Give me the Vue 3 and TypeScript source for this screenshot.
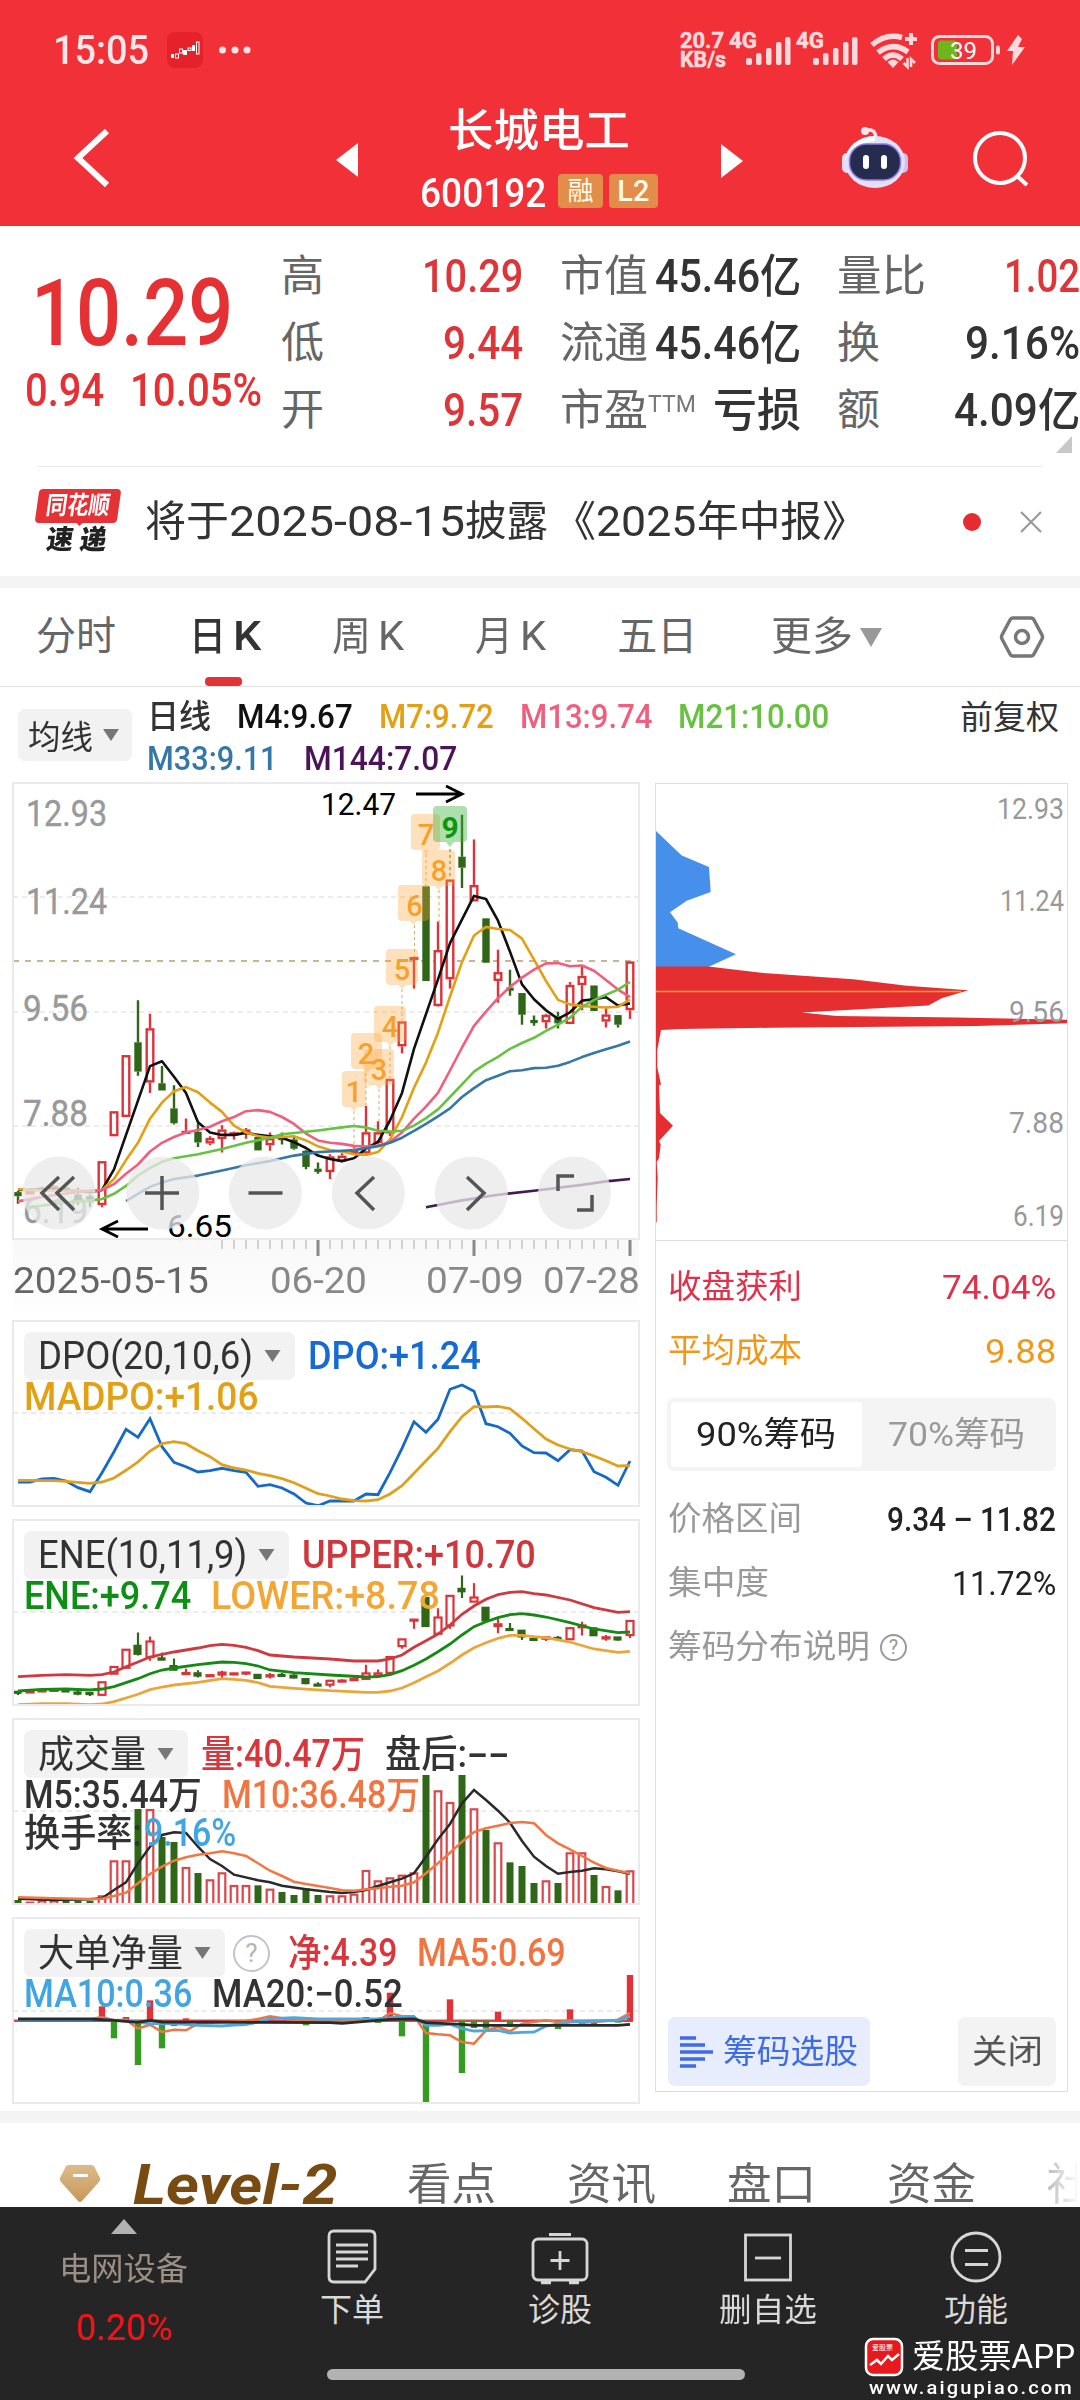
<script setup lang="ts">
import type { Directive } from 'vue'

// Stretches or condenses a line of text to the given width in pixels.
const vFit: Directive<HTMLElement, number> = {
  mounted(el, { value }) {
    const natural = el.offsetWidth
    el.style.transform = `scaleX(${value / natural})`
    el.style.marginRight = `${value - natural}px`
  },
}

type Pt = [number, number]
type Candle = ['r' | 'g', number, number, number, number]

const X0 = 5
const STEP = 12
const cx = (i: number) => X0 + i * STEP

function line(points: Pt[], y: (v: number) => number): string {
  return points.map(([i, v]) => `${cx(i).toFixed(1)},${y(v).toFixed(1)}`).join(' ')
}
function seq(values: number[], y: (v: number) => number): string {
  return line(values.map((v, i) => [i, v] as Pt), y)
}

const RED = '#dd3238'
const GREEN = '#2f6618'

/* ---------- price chart ---------- */
const py = (v: number) => (v - 40) / 2.904
// colour, body top, body bottom, wick top, wick bottom
const candles: Candle[] = [
  ['g', 1228, 1240, 1225, 1262], ['r', 1225, 1235, 1225, 1235], ['r', 1215, 1225, 1212, 1225], ['r', 1210, 1216, 1208, 1218],
  ['g', 1215, 1222, 1212, 1226], ['g', 1235, 1255, 1215, 1265], ['g', 1240, 1258, 1235, 1272], ['r', 1138, 1266, 1138, 1272],
  ['r', 993, 1066, 993, 1066], ['r', 830, 1010, 830, 1010], ['g', 793, 878, 671, 890], ['r', 752, 910, 710, 940],
  ['g', 912, 933, 862, 933], ['g', 985, 1028, 918, 1032], ['r', 1050, 1056, 1014, 1058], ['g', 1053, 1084, 1028, 1097],
  ['r', 1071, 1087, 1066, 1092], ['r', 1046, 1074, 1034, 1113], ['r', 1054, 1064, 1052, 1075], ['r', 1046, 1056, 1042, 1073],
  ['g', 1068, 1107, 1068, 1107], ['r', 1071, 1092, 1055, 1108], ['g', 1068, 1074, 1055, 1090], ['g', 1075, 1102, 1066, 1105],
  ['g', 1108, 1155, 1105, 1162], ['g', 1160, 1166, 1142, 1175], ['r', 1124, 1170, 1118, 1190], ['r', 1122, 1140, 1115, 1142],
  ['r', 1108, 1115, 1095, 1118], ['r', 1054, 1116, 977, 1120], ['r', 1054, 1086, 1022, 1090], ['r', 899, 1058, 899, 1065],
  ['r', 732, 805, 732, 825], ['r', 545, 554, 545, 637], ['g', 340, 615, 340, 615], ['r', 525, 688, 442, 690],
  ['r', 320, 610, 320, 637], ['g', 254, 286, 132, 345], ['r', 336, 384, 204, 384], ['g', 433, 562, 433, 562],
  ['r', 589, 615, 524, 678], ['g', 634, 642, 582, 658], ['g', 650, 713, 650, 742], ['g', 728, 734, 715, 745],
  ['r', 713, 735, 710, 753], ['g', 718, 738, 704, 753], ['r', 626, 740, 618, 740], ['r', 600, 627, 570, 700],
  ['g', 628, 702, 628, 702], ['r', 712, 733, 694, 750], ['g', 714, 742, 714, 750], ['r', 558, 700, 558, 725],
]

const ma4: Pt[] = [[0, 1222], [3, 1220], [6, 1228], [7, 1222], [8, 1162], [11, 862], [12, 848], [13, 893], [14, 940], [15, 1025], [16, 1055], [17, 1062], [18, 1062], [19, 1056], [20, 1062], [22, 1070], [23, 1083], [24, 1100], [25, 1122], [26, 1132], [27, 1138], [28, 1130], [29, 1102], [30, 1082], [31, 1020], [32, 940], [33, 812], [35, 610], [36, 505], [38, 368], [39, 377], [40, 440], [41, 530], [42, 625], [43, 668], [44, 700], [45, 725], [46, 706], [47, 672], [48, 668], [49, 662], [50, 686], [51, 680]]
const ma7: Pt[] = [[0, 1220], [1, 1222], [6, 1225], [7, 1222], [8, 1190], [9, 1135], [10, 1085], [11, 1015], [12, 968], [13, 935], [14, 923], [15, 938], [16, 968], [17, 995], [18, 1035], [19, 1055], [20, 1065], [21, 1070], [22, 1068], [23, 1066], [24, 1078], [25, 1095], [26, 1106], [27, 1110], [28, 1118], [29, 1120], [30, 1112], [31, 1075], [32, 1010], [33, 925], [34, 852], [35, 765], [36, 660], [37, 560], [38, 483], [39, 458], [40, 464], [41, 467], [42, 492], [43, 553], [44, 615], [45, 670], [46, 683], [47, 688], [48, 690], [49, 692], [50, 690], [51, 668]]
const ma13: Pt[] = [[0, 1255], [2, 1242], [4, 1232], [6, 1224], [7, 1222], [8, 1205], [9, 1175], [10, 1148], [11, 1110], [12, 1085], [13, 1068], [14, 1055], [15, 1048], [16, 1038], [17, 1022], [18, 1010], [19, 993], [20, 990], [21, 995], [22, 1010], [23, 1030], [24, 1058], [25, 1078], [26, 1085], [27, 1088], [28, 1094], [29, 1096], [30, 1094], [31, 1082], [32, 1055], [33, 1015], [34, 980], [35, 940], [36, 875], [37, 808], [38, 745], [39, 704], [40, 665], [41, 632], [42, 605], [43, 582], [44, 564], [45, 563], [46, 572], [47, 570], [48, 585], [49, 612], [50, 640], [51, 662]]
const ma21: Pt[] = [[1, 1272], [4, 1258], [6, 1252], [7, 1248], [8, 1233], [9, 1210], [10, 1180], [11, 1158], [12, 1140], [13, 1130], [15, 1118], [17, 1103], [19, 1085], [21, 1070], [22, 1060], [24, 1053], [25, 1049], [27, 1040], [28, 1036], [29, 1040], [30, 1050], [31, 1052], [32, 1050], [33, 1035], [34, 1013], [35, 988], [36, 952], [37, 915], [38, 878], [39, 855], [40, 835], [41, 812], [42, 795], [43, 780], [44, 760], [45, 742], [46, 722], [47, 690], [48, 670], [49, 655], [50, 640], [51, 618]]
const ma33: Pt[] = [[9, 1254], [10, 1233], [11, 1213], [12, 1200], [13, 1190], [15, 1180], [17, 1165], [19, 1150], [21, 1138], [23, 1122], [25, 1112], [26, 1110], [28, 1106], [30, 1095], [31, 1085], [32, 1070], [33, 1050], [34, 1030], [35, 1008], [36, 985], [37, 952], [38, 926], [39, 903], [40, 890], [41, 877], [42, 874], [43, 868], [44, 867], [45, 861], [46, 850], [47, 836], [48, 824], [49, 813], [50, 803], [51, 791]]
const ma144: Pt[] = [[34, 1272], [37, 1252], [40, 1236], [43, 1224], [47, 1207], [49, 1197], [51, 1190]]

const priceLines = [
  { color: '#111', pts: line(ma4, py) },
  { color: '#e3a014', pts: line(ma7, py) },
  { color: '#ef5f7e', pts: line(ma13, py) },
  { color: '#68c242', pts: line(ma21, py) },
  { color: '#3577a6', pts: line(ma33, py) },
  { color: '#451850', pts: line(ma144, py) },
]

const priceLabels = [
  { t: '12.93', x: 13, y: 43, w: 81 }, { t: '11.24', x: 13, y: 131, w: 81 }, { t: '9.56', x: 10, y: 238, w: 65 },
  { t: '7.88', x: 10, y: 342.5, w: 65 }, { t: '6.19', x: 10, y: 440, w: 65 },
]

// numbered markers: digit, bubble left, bubble top, bubble width, digit centre, stem bottom
const marks = [
  { n: 1, x: 329, y: 288, w: 24, c: 341, e: 370 }, { n: 2, x: 338, y: 250, w: 31, c: 353, e: 322 },
  { n: 3, x: 351, y: 266, w: 30, c: 366, e: 340 }, { n: 4, x: 361, y: 223, w: 32, c: 377, e: 297 },
  { n: 5, x: 373, y: 166, w: 32, c: 389, e: 240 }, { n: 6, x: 385, y: 102, w: 31, c: 401.5, e: 174 },
  { n: 7, x: 398, y: 31, w: 29, c: 413, e: 104 }, { n: 8, x: 409, y: 67, w: 33, c: 426, e: 140 },
]

const tools = [46, 149.7, 252.3, 355.3, 458.3, 561.5]
const ticks = Array.from({ length: 35 }, (_, k) => k + 17)

/* ---------- indicator panels ---------- */
const dy = (v: number) => (v - 33) / 3
const dpo = seq([516, 516, 507, 505, 513, 533, 545, 488, 425, 358, 382, 326, 410, 457, 470, 486, 482, 475, 482, 487, 529, 524, 534, 552, 579, 587, 573, 573, 573, 552, 554, 488, 415, 335, 367, 328, 238, 225, 244, 341, 350, 370, 408, 428, 429, 452, 419, 423, 485, 502, 526, 453], dy)
const madpo = seq([511, 511, 512, 512, 514, 517, 520, 516, 504, 481, 456, 423, 401, 395, 401, 422, 440, 464, 474, 480, 490, 497, 506, 518, 535, 551, 558, 567, 572, 573, 569, 552, 527, 490, 452, 415, 365, 320, 290, 291, 289, 296, 325, 356, 387, 405, 417, 425, 438, 452, 468, 467], dy)

const ey = (v: number) => (v - 630) / 3
const eneCandleY = (v: number) => ey(948 + (v - 610) * 0.317)
const upper = line([[0, 1100], [2, 1096], [4, 1094], [6, 1096], [7, 1094], [8, 1086], [9, 1070], [10, 1056], [11, 1041], [12, 1033], [13, 1026], [15, 1014], [16, 1007], [17, 1003], [18, 1006], [19, 1012], [20, 1022], [21, 1035], [23, 1041], [26, 1047], [28, 1053], [30, 1053], [31, 1047], [32, 1035], [33, 1012], [34, 992], [35, 972], [36, 945], [37, 913], [38, 888], [39, 868], [40, 854], [41, 847], [42, 845], [43, 851], [44, 855], [46, 870], [48, 893], [50, 907], [51, 905]], ey)
const ene = line([[0, 1143], [2, 1138], [4, 1137], [6, 1140], [7, 1137], [8, 1130], [9, 1118], [10, 1106], [11, 1091], [12, 1080], [13, 1074], [15, 1064], [17, 1056], [18, 1057], [19, 1061], [20, 1068], [21, 1080], [23, 1088], [26, 1095], [29, 1101], [30, 1100], [31, 1094], [32, 1082], [33, 1066], [34, 1047], [35, 1025], [36, 1002], [37, 975], [38, 950], [39, 935], [40, 923], [41, 914], [42, 911], [43, 915], [44, 921], [46, 938], [48, 957], [50, 968], [51, 966]], ey)
const lower = line([[0, 1184], [2, 1181], [4, 1181], [6, 1184], [7, 1182], [8, 1175], [9, 1164], [10, 1153], [11, 1139], [12, 1131], [13, 1125], [15, 1117], [17, 1106], [18, 1108], [19, 1111], [20, 1118], [21, 1129], [23, 1135], [26, 1142], [29, 1147], [30, 1147], [31, 1143], [32, 1134], [33, 1118], [34, 1100], [35, 1083], [36, 1060], [37, 1035], [38, 1013], [39, 998], [40, 985], [41, 976], [42, 976], [43, 980], [44, 983], [46, 996], [48, 1017], [50, 1027], [51, 1024]], ey)

const vy = (v: number) => (v - 27) / 3
const volumeTops = [570, 575, 571, 571, 572, 572, 573, 556, 451, 451, 297, 297, 381, 396, 471, 489, 508, 487, 525, 525, 526, 536, 546, 555, 535, 555, 556, 556, 551, 480, 511, 502, 494, 487, 195, 241, 276, 195, 295, 360, 397, 457, 468, 519, 511, 519, 427, 427, 495, 528, 541, 481]
const volM5 = line([[0, 566], [3, 570], [6, 568], [7, 565], [8, 540], [9, 517], [10, 460], [11, 410], [12, 375], [13, 367], [14, 369], [15, 410], [16, 447], [17, 468], [18, 494], [20, 511], [21, 517], [22, 527], [24, 538], [26, 546], [27, 549], [28, 546], [29, 540], [30, 528], [31, 517], [32, 506], [33, 490], [34, 440], [35, 388], [36, 342], [37, 280], [38, 240], [39, 270], [40, 302], [41, 338], [42, 393], [43, 440], [44, 468], [45, 491], [46, 486], [47, 482], [48, 475], [49, 478], [50, 484], [51, 491]], vy)
const volM10 = line([[0, 562], [3, 565], [6, 567], [7, 566], [8, 558], [9, 548], [10, 520], [11, 492], [12, 470], [13, 452], [14, 442], [15, 434], [16, 430], [17, 424], [18, 430], [19, 438], [20, 460], [21, 482], [22, 498], [23, 515], [24, 522], [25, 528], [26, 534], [27, 541], [28, 542], [29, 538], [30, 535], [31, 530], [32, 527], [33, 517], [34, 490], [35, 460], [36, 428], [37, 395], [38, 366], [39, 355], [40, 347], [41, 339], [42, 336], [43, 340], [44, 375], [45, 400], [46, 418], [47, 438], [48, 458], [49, 474], [50, 482], [51, 490]], vy)

const ny = (v: number) => (v - 623) / 3
const NET_BASE = 931
const netBars: Pt[] = [[7, 888], [8, 984], [9, 920], [10, 1064], [11, 870], [12, 1014], [13, 947], [14, 924], [21, 917], [24, 945], [29, 920], [30, 938], [31, 847], [32, 978], [34, 1180], [36, 867], [37, 1088], [38, 953], [39, 955], [40, 904], [41, 950], [45, 956], [46, 897], [47, 942], [48, 942], [50, 937], [51, 794]]
const netMa5 = line([[0, 927], [6, 927], [7, 920], [8, 930], [9, 928], [10, 955], [11, 943], [12, 965], [13, 958], [14, 960], [15, 940], [17, 935], [19, 932], [20, 926], [21, 918], [23, 930], [28, 930], [30, 932], [31, 908], [32, 918], [33, 918], [34, 968], [35, 972], [36, 975], [37, 995], [38, 1000], [39, 960], [40, 950], [41, 963], [42, 940], [43, 935], [44, 930], [45, 935], [46, 930], [47, 937], [49, 932], [50, 928], [51, 908]], ny)
const netMa10 = line([[0, 928], [7, 928], [9, 932], [11, 940], [13, 940], [15, 945], [17, 947], [18, 944], [19, 943], [20, 935], [21, 925], [23, 922], [25, 926], [30, 925], [32, 920], [33, 920], [34, 945], [35, 945], [36, 942], [37, 955], [38, 962], [40, 960], [41, 968], [42, 966], [43, 965], [44, 947], [46, 935], [48, 932], [50, 930], [51, 918]], ny)
const netMa20 = line([[0, 926], [6, 926], [8, 930], [10, 936], [11, 930], [12, 935], [20, 936], [26, 937], [27, 939], [31, 927], [33, 926], [34, 937], [37, 942], [38, 945], [50, 945], [51, 942]], ny)

/* ---------- chip distribution ---------- */
function area(points: Pt[]): string {
  return points.map(([x, v]) => `${((x - 48) / 3).toFixed(1)},${((v - 270) / 2.613).toFixed(1)}`).join(' ')
}
const chipAbove = area([[48, 393], [125, 457], [207, 487], [212, 552], [140, 575], [90, 605], [113, 632], [115, 647], [288, 715], [205, 748], [48, 748]])
const chipBelow = area([[48, 747], [205, 747], [370, 764], [640, 780], [800, 797], [985, 809], [905, 830], [865, 849], [780, 853], [485, 867], [590, 876], [950, 880], [1281, 886], [1281, 895], [1010, 902], [390, 907], [120, 910], [63, 913], [52, 965], [52, 1010], [63, 1055], [57, 1058], [60, 1130], [99, 1163], [57, 1203], [62, 1212], [57, 1248], [50, 1258], [53, 1300], [50, 1370], [50, 1415], [48, 1415]])
const chipLabels = [
  { t: '12.93', y: 34.5, w: 67 }, { t: '11.24', y: 126.5, w: 64 }, { t: '9.56', y: 238, w: 55 },
  { t: '7.88', y: 348.5, w: 55 }, { t: '6.19', y: 441.5, w: 51 },
]

/* ---------- quote ---------- */
const quoteCols = [
  [
    { l: '高', lw: 43, v: '10.29', w: 101, c: 'up' },
    { l: '低', lw: 43, v: '9.44', w: 80, c: 'up' },
    { l: '开', lw: 43, v: '9.57', w: 80, c: 'up' },
  ],
  [
    { l: '市值', lw: 88, v: '45.46亿', w: 146, c: 'dark' },
    { l: '流通', lw: 88, v: '45.46亿', w: 146, c: 'dark' },
    { l: '市盈', lw: 88, sup: 'TTM', v: '亏损', w: 88, c: 'dark' },
  ],
  [
    { l: '量比', lw: 89, v: '1.02', w: 76, c: 'up' },
    { l: '换', lw: 43, v: '9.16%', w: 115, c: 'dark' },
    { l: '额', lw: 43, v: '4.09亿', w: 126, c: 'dark' },
  ],
] as { l: string; lw: number; sup?: string; v: string; w: number; c: string }[][]
</script>

<template>
  <div class="screen">
    <header class="top">
      <div class="status">
        <span v-fit="96" class="clock">15:05</span>
        <svg class="app-ico" width="36" height="36" viewBox="0 0 36 36">
          <rect width="36" height="36" rx="8" fill="#e52129" />
          <g fill="#fff"><rect x="4" y="22" width="3" height="4" /><rect x="16" y="18" width="4" height="5" /><rect x="25" y="13" width="3" height="6" /></g>
          <g fill="none" stroke="#fff" stroke-width="1"><rect x="8.500" y="22" width="3" height="4" /><rect x="12.500" y="17" width="3" height="4" /><rect x="21" y="16" width="3" height="2.500" /><rect x="29.500" y="10" width="2.500" height="12" /></g>
        </svg>
        <svg width="32" height="8" viewBox="0 0 32 8" fill="#ffe3e5"><circle cx="3.500" cy="4" r="3.500" /><circle cx="16" cy="4" r="3.500" /><circle cx="28" cy="4" r="3.500" /></svg>
        <svg class="sys" width="350" height="40" viewBox="0 0 350 40" fill="#ffd9dc">
          <g font-weight="700" font-size="22" stroke="#ffd9dc" stroke-width=".5">
            <text x="0" y="18" textLength="44" lengthAdjust="spacingAndGlyphs">20.7</text>
            <text x="0" y="37" textLength="46" lengthAdjust="spacingAndGlyphs">KB/s</text>
            <text x="49" y="18" textLength="28" lengthAdjust="spacingAndGlyphs">4G</text>
            <text x="116" y="18" textLength="28" lengthAdjust="spacingAndGlyphs">4G</text>
          </g>
          <g v-for="x in [66, 133]" :key="x">
            <rect :x="x" y="28" width="6" height="7" rx="2" />
            <rect :x="x + 10" y="23" width="5.500" height="12" rx="2" />
            <rect :x="x + 20" y="18" width="5.500" height="17" rx="2" />
            <rect :x="x + 30" y="12" width="5.500" height="23" rx="2" />
            <rect :x="x + 39" y="7" width="5.500" height="28" rx="2" />
          </g>
          <g fill="none" stroke="#ffd9dc" stroke-width="5.500">
            <path d="M192 15 Q206 3 222 7.500" /><path d="M198 22.500 Q213 11 228 22" /><path d="M204 29 Q213 21 222 29" />
          </g>
          <path d="M207.500 32 Q213 27 218.500 32 L213 38Z" />
          <path d="M231 3v12M225 9h12" stroke="#ffd9dc" stroke-width="4" />
          <path d="M227.500 28v9l-4-4M231 37v-8l4 4" fill="none" stroke="#ffd9dc" stroke-width="2.500" />
          <rect x="252.500" y="6.500" width="60" height="27" rx="7" fill="none" stroke="#ffd9dc" stroke-width="3" />
          <rect x="258" y="10.500" width="19" height="19" rx="3" fill="#6fb51c" />
          <rect x="316" y="15.500" width="4" height="9" rx="2" />
          <text x="270" y="29" font-size="24" fill="#fff" textLength="27" lengthAdjust="spacingAndGlyphs">39</text>
          <path d="M338 5 L327 21 H333 L332 35 L345 17 H338 L342 9Z" />
        </svg>
      </div>
      <div class="nav">
        <svg class="back" width="40" height="62" viewBox="0 0 40 62"><path d="M34 4 L5 31 L34 58" fill="none" stroke="#fff" stroke-width="6" /></svg>
        <svg class="prev" width="22" height="34" viewBox="0 0 22 34"><path d="M22 0v34L0 17z" fill="#fff" /></svg>
        <div class="title">
          <b v-fit="182">长城电工</b>
          <div class="code">
            <span v-fit="126" class="num">600192</span>
            <i class="tag t1">融</i><i class="tag t2">L2</i>
          </div>
        </div>
        <svg class="next" width="22" height="34" viewBox="0 0 22 34"><path d="M0 0v34L22 17z" fill="#fff" /></svg>
        <svg class="robot" width="68" height="64" viewBox="0 0 68 64">
          <path d="M24 6 Q34 2 35 13" fill="none" stroke="#f4e2f0" stroke-width="3.500" /><circle cx="24" cy="6" r="4" fill="#f6e6f2" />
          <rect x="1" y="28" width="10" height="20" rx="5" fill="#e6dcf8" /><rect x="57" y="28" width="10" height="20" rx="5" fill="#c8c2f4" />
          <ellipse cx="34" cy="37" rx="30" ry="26" fill="#e4e0fa" /><path d="M34 11 A30 26 0 0 0 4 37 Q6 20 34 16Z" fill="#fff" />
          <rect x="8.500" y="19" width="51" height="36" rx="17" fill="#252c4f" stroke="#8a7be0" stroke-width="1.500" />
          <rect x="22" y="30" width="6" height="14" rx="3" fill="#fff" /><rect x="40" y="30" width="6" height="14" rx="3" fill="#fff" />
        </svg>
        <svg class="find" width="58" height="58" viewBox="0 0 58 58" fill="none" stroke="#fff" stroke-width="4"><circle cx="28" cy="28" r="25" /><path d="M45 46l10 9" /></svg>
      </div>
    </header>

    <section class="quote">
      <div class="last">
        <span v-fit="202" class="big">10.29</span>
        <div class="chg"><span v-fit="79">0.94</span><span v-fit="132">10.05%</span></div>
      </div>
      <div v-for="(col, c) in quoteCols" :key="c" class="qcol">
        <div v-for="r in col" :key="r.l" class="qrow">
          <span v-fit="r.lw" class="ql">{{ r.l }}</span><sup v-if="r.sup" v-fit="48">{{ r.sup }}</sup>
          <span v-fit="r.w" class="qv" :class="r.c">{{ r.v }}</span>
        </div>
      </div>
      <svg class="corner" width="16" height="17" viewBox="0 0 16 17"><path d="M16 0v17H0z" fill="#c8c8c8" /></svg>
    </section>

    <section class="news">
      <div class="logo">
        <div class="l1"><span v-fit="64">同花顺</span></div>
        <div class="l2"><span v-fit="60">速 递</span></div>
      </div>
      <p><span v-fit="41">将</span><span v-fit="43">于</span><span v-fit="236">2025-08-15</span><span v-fit="83">披露</span><span v-fit="44" class="lq">《</span><span v-fit="100">2025</span><span v-fit="125">年中报</span><span v-fit="48">》</span></p>
      <i class="dot"></i>
      <svg width="22" height="22" viewBox="0 0 22 22"><path d="M1 1l20 20M21 1L1 21" stroke="#999" stroke-width="2.200" /></svg>
    </section>

    <nav class="tabs">
      <span v-fit="80" class="tb a">分时</span>
      <span class="tb on"><em v-fit="37">日</em><em v-fit="28">K</em></span>
      <span class="tb c"><em v-fit="39">周</em><em v-fit="26">K</em></span>
      <span class="tb c"><em v-fit="38">月</em><em v-fit="26">K</em></span>
      <span v-fit="80" class="tb e">五日</span>
      <span v-fit="82" class="tb f">更多</span>
      <svg class="caret" width="22" height="19" viewBox="0 0 22 19"><path d="M0 0h22L11 19z" fill="#999" /></svg>
      <svg class="hex" width="46" height="44" viewBox="0 0 46 44" fill="none" stroke="#777" stroke-width="3.500"><path d="M14 3h18q2 0 3 2l8 15q1 2 0 4l-8 15q-1 2-3 2H14q-2 0-3-2L3 24q-1-2 0-4L11 5q1-2 3-2z" /><circle cx="23" cy="22" r="6.500" /></svg>
    </nav>

    <section class="malegend">
      <div class="btn mb"><span v-fit="65">均线</span><svg width="16" height="12" viewBox="0 0 16 12"><path d="M0 0h16L8 12z" fill="#777" /></svg></div>
      <div class="mal">
        <div><span v-fit="64">日线</span><span v-fit="116" style="color: #111">M4:9.67</span><span v-fit="115" class="gold">M7:9.72</span><span v-fit="133" class="pink">M13:9.74</span><span v-fit="151" class="lime">M21:10.00</span></div>
        <div><span v-fit="131" class="blue">M33:9.11</span><span v-fit="153" class="plum">M144:7.07</span></div>
      </div>
      <span v-fit="99" class="fq">前复权</span>
    </section>

    <main class="charts">
      <div class="left">
        <div class="box main">
          <svg width="626" height="456" viewBox="0 0 626 456">
            <g stroke="#d9d9d9" stroke-dasharray="5 4"><path d="M0 114h626M0 229h626M0 343h626" /></g>
            <path d="M0 178h626" stroke="#b5a069" stroke-width="1.500" stroke-dasharray="6 6" />
            <text v-for="l in priceLabels" :key="l.t" :x="l.x" :y="l.y" :textLength="l.w" lengthAdjust="spacingAndGlyphs" font-size="36" fill="#999" stroke="#999" stroke-width=".4">{{ l.t }}</text>
            <g v-for="(k, i) in candles" :key="i" :stroke="k[0] === 'r' ? RED : GREEN" stroke-width="2.400">
              <path :d="`M${cx(i)} ${py(k[3])}V${py(k[1])}M${cx(i)} ${py(k[2])}V${py(k[4])}`" />
              <rect :x="cx(i) - (k[0] === 'r' ? 3.300 : 2.500)" :y="py(k[1]) + 1.200" :width="k[0] === 'r' ? 6.600 : 5" :height="Math.max(0.8, py(k[2]) - py(k[1]) - 2.400)" :fill="k[0] === 'r' ? '#fff' : GREEN" />
            </g>
            <polyline v-for="(l, i) in priceLines" :key="'l' + i" :points="l.pts" fill="none" :stroke="l.color" stroke-width="2.600" stroke-linejoin="round" />
            <g v-for="m in marks" :key="'m' + m.n">
              <path :d="`M${m.c} ${m.y + 40}V${m.e}`" stroke="#d8ae55" stroke-dasharray="3 3" />
              <path :d="`M${m.x + 4} ${m.y}h${m.w - 8}q4 0 4 4v28q0 4-4 4h-${m.w / 2 - 8}l-4 4-4-4h-${m.w / 2 - 8}q-4 0-4-4v-28q0-4 4-4z`" fill="#fba63b" fill-opacity=".34" />
              <text :x="m.c" :y="m.y + 31" text-anchor="middle" font-size="29" font-weight="500" fill="#f6a12b">{{ m.n }}</text>
            </g>
            <path d="M437 66V96" stroke="#6a8c1a" stroke-dasharray="3 3" />
            <path d="M424 23h26q4 0 4 4v28q0 4-4 4h-9l-4 5-4-5h-9q-4 0-4-4v-28q0-4 4-4z" fill="#3fb33f" fill-opacity=".42" />
            <text x="437" y="55" text-anchor="middle" font-size="30" font-weight="700" fill="#0a970a">9</text>
            <text x="308" y="31.500" textLength="75" lengthAdjust="spacingAndGlyphs" font-size="32" fill="#000">12.47</text>
            <text x="154" y="454" textLength="65" lengthAdjust="spacingAndGlyphs" font-size="32" fill="#000">6.65</text>
            <g fill="none" stroke="#000" stroke-width="2.800"><path d="M403 11h46M433 3l16 8-16 8" /><path d="M135 446H89M105 438l-16 8 16 8" /></g>
            <circle v-for="t in tools" :key="t" :cx="t" cy="410" r="36.500" fill="#e9e9e9" fill-opacity=".76" />
            <g fill="none" stroke="#555" stroke-width="3.500">
              <path d="M46 394l-17 16 17 17M61 394l-17 16 17 17" /><path d="M132 410h34M149 393v34" /><path d="M235.500 410h34" />
              <path d="M361 394l-17 16 17 17" /><path d="M454 394l17 16-17 17" /><path d="M545 408v-15h16M564 427h15v-15" />
            </g>
          </svg>
        </div>
        <div class="axis">
          <svg width="626" height="18" viewBox="0 0 626 18">
            <path v-for="i in ticks" :key="i" :d="`M${cx(i)} 1v${[25, 38, 51].includes(i) ? 16 : 9}`" :stroke="[25, 38, 51].includes(i) ? '#8a8a8a' : '#c4c4c4'" :stroke-width="[25, 38, 51].includes(i) ? 3 : 1.500" />
          </svg>
          <div class="dates"><span v-fit="196">2025-05-15</span><span v-fit="97">06-20</span><span v-fit="98">07-09</span><span v-fit="97">07-28</span></div>
        </div>

        <div class="box panel">
          <svg width="626" height="185" viewBox="0 0 626 185" fill="none">
            <path d="M0 92h626" stroke="#d9d9d9" stroke-dasharray="5 4" />
            <polyline :points="dpo" stroke="#1569c7" stroke-width="2.800" /><polyline :points="madpo" stroke="#dfa01d" stroke-width="2.800" />
          </svg>
          <div class="legend">
            <div><span class="btn"><em v-fit="215">DPO(20,10,6)</em><svg width="17" height="12" viewBox="0 0 16 12"><path d="M0 0h16L8 12z" fill="#777" /></svg></span><span v-fit="173" style="color: #156bd3">DPO:+1.24</span></div>
            <div><span v-fit="234" class="gold">MADPO:+1.06</span></div>
          </div>
        </div>

        <div class="box panel">
          <svg width="626" height="185" viewBox="0 0 626 185" fill="none">
            <path d="M0 92h626" stroke="#d9d9d9" stroke-dasharray="5 4" />
            <g v-for="(k, i) in candles" :key="i" :stroke="k[0] === 'r' ? RED : GREEN" stroke-width="2.200">
              <path :d="`M${cx(i)} ${eneCandleY(k[3])}V${eneCandleY(k[1])}M${cx(i)} ${eneCandleY(k[2])}V${eneCandleY(k[4])}`" />
              <rect :x="cx(i) - 3.500" :y="eneCandleY(k[1]) + 0.500" :width="k[0] === 'r' ? 7 : 6" :height="Math.max(1, eneCandleY(k[2]) - eneCandleY(k[1]) - 1)" :fill="k[0] === 'r' ? '#fff' : GREEN" />
            </g>
            <polyline :points="upper" stroke="#cf3a40" stroke-width="2.800" /><polyline :points="ene" stroke="#148a14" stroke-width="2.800" /><polyline :points="lower" stroke="#eaa63d" stroke-width="2.800" />
          </svg>
          <div class="legend">
            <div><span class="btn"><em v-fit="209">ENE(10,11,9)</em><svg width="17" height="12" viewBox="0 0 16 12"><path d="M0 0h16L8 12z" fill="#777" /></svg></span><span v-fit="234" style="color: #cf373c">UPPER:+10.70</span></div>
            <div><span v-fit="167" style="color: #0d8f14">ENE:+9.74</span><span v-fit="229" style="color: #f3a633">LOWER:+8.78</span></div>
          </div>
        </div>

        <div class="box panel">
          <svg width="626" height="186" viewBox="0 0 626 186" fill="none">
            <path d="M0 92h626" stroke="#d9d9d9" stroke-dasharray="5 4" />
            <template v-for="(v, i) in volumeTops" :key="i">
              <rect v-if="candles[i][0] === 'g'" :x="cx(i) - 3.500" :y="vy(v)" width="7" :height="186 - vy(v)" :fill="GREEN" />
              <rect v-else :x="cx(i) - 3.300" :y="vy(v) + 1" width="6.600" :height="184.500 - vy(v)" fill="#fff" stroke="#d9474c" stroke-width="2.200" />
            </template>
            <polyline :points="volM5" stroke="#2a2a2a" stroke-width="2.500" /><polyline :points="volM10" stroke="#f07844" stroke-width="2.500" />
          </svg>
          <div class="legend">
            <div><span class="btn"><em v-fit="108">成交量</em><svg width="17" height="12" viewBox="0 0 16 12"><path d="M0 0h16L8 12z" fill="#777" /></svg></span><span v-fit="164" class="redt">量:40.47万</span><span class="pair"><em v-fit="82">盘后:</em><em v-fit="43">--</em></span></div>
            <div><span v-fit="178">M5:35.44万</span><span v-fit="198" class="orange">M10:36.48万</span></div>
            <div class="tight"><span v-fit="118">换手率:</span><span v-fit="92" class="sky">9.16%</span></div>
          </div>
        </div>

        <div class="box panel">
          <svg width="626" height="186" viewBox="0 0 626 186" fill="none">
            <path d="M0 93h626" stroke="#d9d9d9" stroke-dasharray="5 4" />
            <path :d="`M0 ${ny(NET_BASE)}H620`" stroke="#d9474c" stroke-width="2.500" />
            <rect v-for="[i, v] in netBars" :key="i" :x="cx(i) - 3.200" :y="ny(Math.min(v, NET_BASE))" width="6.400" :height="Math.abs(v - NET_BASE) / 3" :fill="v < NET_BASE ? '#e03338' : '#359b22'" />
            <polyline :points="netMa5" stroke="#ea7546" stroke-width="2.500" /><polyline :points="netMa10" stroke="#4fa8dc" stroke-width="2.800" /><polyline :points="netMa20" stroke="#2a2a2a" stroke-width="2.800" />
          </svg>
          <div class="legend">
            <div><span class="btn"><em v-fit="145">大单净量</em><svg width="17" height="12" viewBox="0 0 16 12"><path d="M0 0h16L8 12z" fill="#777" /></svg></span><i class="help">?</i><span v-fit="109" class="redt">净:4.39</span><span v-fit="149" class="orange">MA5:0.69</span></div>
            <div><span v-fit="168" class="sky">MA10:0.36</span><span v-fit="191">MA20:−0.52</span></div>
          </div>
        </div>
      </div>

      <aside class="chips">
        <svg width="411" height="456" viewBox="0 0 411 456">
          <polygon :points="chipAbove" fill="#468fea" /><polygon :points="chipBelow" fill="#e52e30" />
          <path d="M0 207.500h305" stroke="#f5a623" stroke-width="1.500" />
          <g fill="#999" font-size="29.500"><text v-for="l in chipLabels" :key="l.t" :x="408 - l.w" :y="l.y" :textLength="l.w" lengthAdjust="spacingAndGlyphs">{{ l.t }}</text></g>
        </svg>
        <div class="info">
          <div class="ir crim"><span v-fit="134">收盘获利</span><span v-fit="114" class="n">74.04%</span></div>
          <div class="ir amber"><span v-fit="134">平均成本</span><span v-fit="71" class="n">9.88</span></div>
          <div class="seg"><span class="act"><em v-fit="140" class="n">90%筹码</em></span><span><em v-fit="137" class="n">70%筹码</em></span></div>
          <div class="ir"><span v-fit="134">价格区间</span><span v-fit="169" class="n dk">9.34 – 11.82</span></div>
          <div class="ir"><span v-fit="101">集中度</span><span v-fit="104" class="n dk thin">11.72%</span></div>
          <div class="ir q"><span v-fit="202">筹码分布说明</span><i>?</i></div>
        </div>
        <div class="acts">
          <button class="pick"><svg width="33" height="32" viewBox="0 0 33 32" stroke="#3e6ce6" stroke-width="3.500"><path d="M0 2h16M0 9h25M0 16h33M0 23h25M0 30h16" /></svg><span v-fit="135">筹码选股</span></button>
          <button class="close"><span v-fit="71">关闭</span></button>
        </div>
      </aside>
    </main>

    <nav class="subtabs">
      <svg width="42" height="38" viewBox="0 0 42 38"><defs><linearGradient id="gem" x1="0" y1="0" x2="0" y2="1"><stop offset="0" stop-color="#dcbb8c" /><stop offset="1" stop-color="#c6985a" /></linearGradient></defs><path d="M10 0h22q2 0 3 1l6 12q1 2-1 4L23 36q-2 2-4 0L2 17q-2-2-1-4L7 1q1-1 3-1z" fill="url(#gem)" /><path d="M14 10.500h15" stroke="#fff" stroke-width="3" /></svg>
      <b v-fit="205">Level-2</b>
      <span v-fit="89">看点</span><span v-fit="89">资讯</span><span v-fit="89">盘口</span><span v-fit="89">资金</span><span class="fade">社区</span>
    </nav>

    <footer class="bar">
      <div class="idx">
        <svg width="26" height="15" viewBox="0 0 26 15"><path d="M13 0l13 15H0z" fill="#b3b3b3" /></svg>
        <span v-fit="129" class="nm">电网设备</span><span v-fit="97" class="pc">0.20%</span>
      </div>
      <div class="it">
        <svg width="60" height="56" viewBox="0 0 60 56" fill="none" stroke="#d6d6d6" stroke-width="2.800"><path d="M12 2h36q5 0 5 5v33l-10 13H12q-5 0-5-5V7q0-5 5-5z" /><path d="M14 16h32M14 23h32M14 30h32M14 37h22" /></svg>
        <span v-fit="64">下单</span>
      </div>
      <div class="it">
        <svg width="60" height="56" viewBox="0 0 60 56" fill="none" stroke="#d6d6d6" stroke-width="2.800"><rect x="3" y="10" width="54" height="41" rx="5" /><path d="M19 5.500h22M30 22v19M20.500 31.500h19" /><path d="M11 53.500h10M39 53.500h10" stroke-width="3.500" /></svg>
        <span v-fit="64">诊股</span>
      </div>
      <div class="it">
        <svg width="60" height="56" viewBox="0 0 60 56" fill="none" stroke="#d6d6d6" stroke-width="2.800"><rect x="7.500" y="6" width="45" height="45" /><path d="M17 29h26" /></svg>
        <span v-fit="98">删自选</span>
      </div>
      <div class="it">
        <svg width="60" height="56" viewBox="0 0 60 56" fill="none" stroke="#d6d6d6" stroke-width="2.800"><circle cx="30" cy="28" r="24" /><path d="M19 21.500h23M19 35.500h23" /></svg>
        <span v-fit="64">功能</span>
      </div>
      <i class="home"></i>
      <div class="mark">
        <div class="m1"><svg width="38" height="38" viewBox="0 0 38 38"><rect x="1" y="1" width="36" height="36" rx="7" fill="#e8191c" stroke="#fff" stroke-width="2.500" /><path d="M5 27l7-5 4 4 7-8 4 4 7-6" fill="none" stroke="#fff" stroke-width="2.500" /><text x="7" y="12" font-size="7" fill="#fff">爱股票</text></svg><span v-fit="163">爱股票APP</span></div>
        <span v-fit="205" class="m2">www.aigupiao.com</span>
      </div>
    </footer>
  </div>
</template>

<style>
body { background: #fff; }
</style>

<style scoped>
.screen { width: 1080px; height: 2400px; overflow: hidden; display: flex; flex-direction: column; background: #fff; color: #333; font-family: Roboto, "Noto Sans CJK SC", sans-serif; }
.screen * { box-sizing: border-box; }
svg { display: block; flex: none; overflow: visible; font-family: Roboto, "Noto Sans CJK SC", sans-serif; }
em, i { font-style: normal; }
span, em, b, sup { display: inline-block; white-space: nowrap; transform-origin: left center; flex: none; }

.top { height: 226px; background: #f23037; color: #fff; flex: none; }
.status { height: 100px; display: flex; align-items: center; padding-left: 53px; }
.clock { font-size: 41px; line-height: 40px; color: #ffe6e8; font-weight: 500; }
.app-ico { margin: 0 16px 0 18px; }
.sys { margin-left: 429px; }
.nav { height: 126px; display: flex; align-items: flex-start; }
.back { margin: 27px 0 0 73px; }
.prev { margin: 43px 0 0 223px; }
.title { width: 238px; margin-left: 62px; padding-top: 4px; }
.title b { margin-left: 28px; font-size: 45px; line-height: 56px; font-weight: 500; }
.code { display: flex; align-items: center; height: 36px; margin-top: 15px; }
.num { font-size: 40px; font-weight: 500; }
.tag { height: 34px; border-radius: 4px; background: #e38d4b; text-align: center; line-height: 34px; color: #fffbe6; margin-top: -4px; }
.t1 { width: 45px; margin-left: 12px; font-size: 26px; }
.t2 { width: 50px; margin-left: 6px; font-size: 29px; font-weight: 500; }
.next { margin: 44px 0 0 63px; }
.robot { margin: 25px 0 0 98px; }
.find { margin: 30px 0 0 63px; }

.quote { height: 240px; flex: none; display: grid; grid-template-columns: 281px 279px 277px 243px; position: relative; }
.last { padding: 39px 0 0 25px; color: #e53034; }
.big { font-size: 93px; line-height: 97px; font-weight: 500; margin-left: 6px; }
.chg { display: flex; gap: 26px; font-size: 46px; line-height: 58px; font-weight: 500; margin-top: -1px; }
.qcol { padding-top: 17px; }
.qcol:nth-child(2) { width: 242px; }
.qcol:nth-child(3) { width: 241px; }
.qrow { display: flex; height: 67px; align-items: center; }
.ql { font-size: 43px; color: #666; line-height: 67px; }
.qv { font-size: 46px; line-height: 67px; margin-left: auto; font-weight: 500; }
.up { color: #dc363a; }
.dark { color: #333; }
.qrow sup { font-size: 24px; line-height: 24px; color: #777; margin: -14px 0 0 0; }
.corner { position: absolute; right: 8px; bottom: 13px; }

.news { height: 110px; flex: none; margin: 0 38px 0 37px; border-top: 1px solid #e9e9e9; display: flex; align-items: center; }
.logo { width: 82px; height: 66px; }
.l1 { height: 34px; background: #e43236; border-radius: 4px; transform: skewX(-8deg); color: #fff; font-size: 25px; font-weight: 700; line-height: 34px; padding-left: 9px; position: relative; }
.l1::after { content: ""; position: absolute; left: 40px; top: 32px; border: 5px solid transparent; border-top-color: #e43236; }
.l2 { font-size: 27px; font-weight: 900; line-height: 28px; padding: 3px 0 0 10px; transform: skewX(-8deg); color: #222; }
.news p { margin: 0 0 0 26px; display: flex; font-size: 42px; line-height: 60px; color: #333; font-weight: 400; }
.lq { margin-left: 4px; }
.dot { width: 18px; height: 18px; border-radius: 50%; background: #e62c30; margin: 0 39px 0 auto; }

.tabs { height: 111px; flex: none; border-top: 12px solid #f4f4f4; border-bottom: 1.500px solid #e2e2e2; display: flex; align-items: center; font-size: 40px; color: #666; }
.tb { line-height: 98px; }
.a { margin-left: 36px; }
.tb.on { color: #333; font-weight: 500; margin-left: 73px; width: 72px; position: relative; }
.tb.on::after { content: ""; position: absolute; left: 16px; bottom: 0; width: 37px; height: 9px; border-radius: 4px; background: #e23336; }
.on em:last-child { margin-left: 7px; }
.c { margin-left: 71px; }
.c em:last-child { margin-left: 7px; }
.e { margin-left: 71px; }
.f { margin-left: 74px; }
.caret { margin-left: 7px; }
.hex { margin-left: auto; margin-right: 35px; }

.malegend { height: 96px; flex: none; display: flex; font-size: 33px; font-weight: 500; }
.btn { display: inline-flex; align-items: center; background: #f2f2f2; border-radius: 7px; flex: none; }
.mb { width: 114px; height: 52px; margin: 22px 0 0 18px; padding-left: 10px; gap: 10px; font-weight: 400; }
.mal { margin: 9px 0 0 15px; width: 700px; }
.mal div { display: flex; gap: 26px; height: 42px; line-height: 42px; }
.fq { margin: 10px 0 0 113px; font-weight: 400; line-height: 42px; }
.gold { color: #e3a014; }
.pink { color: #ef5f7e; }
.lime { color: #68c242; }
.blue { color: #3577a6; }
.plum { color: #4c1458; }
.redt { color: #d9353a; }
.orange { color: #f07540; }
.sky { color: #41a5e4; }

.charts { height: 1328px; flex: none; display: flex; align-items: flex-start; padding-left: 13px; }
.left { width: 626px; }
.box { outline: 2px solid #eaeaea; outline-offset: -1px; background: #fff; }
.main { height: 456px; }
.axis { height: 82px; background: linear-gradient(#f8f8f8, #fff); }
.dates { display: flex; font-size: 36px; line-height: 48px; color: #888; }
.dates span:first-child { color: #666; }
.dates span:nth-child(2) { margin-left: 61px; }
.dates span:nth-child(3) { margin-left: 59px; }
.dates span:nth-child(4) { margin-left: 19px; }
.panel { display: grid; height: 185px; margin-bottom: 14px; overflow: hidden; }
.panel > * { grid-area: 1 / 1; }
.legend { padding: 11px 0 0 11px; font-size: 38px; font-weight: 500; }
.legend div { display: flex; gap: 20px; height: 38px; line-height: 38px; align-items: center; }
.legend div:first-child { height: 48px; margin-bottom: -2px; }
.legend .btn { height: 48px; padding: 0 14px; gap: 11px; margin-right: -7px; font-weight: 400; }
.legend .btn em { line-height: 48px; }
.legend .tight { gap: 2px; }
.legend .pair { display: flex; }
.help { width: 37px; height: 37px; border: 2.500px solid #c4c4c4; border-radius: 50%; color: #b5b5b5; font-size: 26px; font-weight: 400; line-height: 32px; text-align: center; margin: 0 -2px 0 -5px; flex: none; }

.chips { width: 413px; height: 1309px; margin-left: 16px; border: 1px solid #dedede; display: flex; flex-direction: column; }
.info { border-top: 1px solid #dedede; padding: 0 11px 0 12px; color: #999; font-size: 33px; flex: 1; }
.n { font-size: 34px; }
.ir { height: 64px; display: flex; align-items: center; justify-content: space-between; line-height: 64px; }
.ir:first-child { margin-top: 14px; }
.crim { color: #e0304a; }
.amber { color: #f0981a; }
.dk { color: #222; font-weight: 500; }
.dk.thin { font-weight: 400; }
.seg { height: 73px; margin: 15px 0 16px -1px; width: 389px; background: #f4f4f4; border-radius: 7px; padding: 4px; display: flex; }
.seg span { width: 191px; height: 65px; line-height: 65px; padding-left: 26px; }
.seg .act { background: #fff; border-radius: 4px; color: #222; padding-left: 25px; }
.ir.q { justify-content: flex-start; }
.ir.q i { width: 27px; height: 27px; border: 2px solid #999; border-radius: 50%; font-size: 20px; line-height: 23px; text-align: center; margin-left: 10px; }
.acts { display: flex; justify-content: space-between; padding: 0 11px 5px 12px; }
button { border: 0; height: 69px; border-radius: 7px; font: 33px/69px Roboto, "Noto Sans CJK SC", sans-serif; display: flex; align-items: center; padding: 0; }
.pick { width: 202px; background: #e7edfc; color: #3e6ce6; padding-left: 12px; gap: 10px; }
.close { width: 98px; background: #f3f3f3; color: #555; padding-left: 14px; }

.subtabs { height: 96px; flex: none; border-top: 12px solid #f4f4f4; display: flex; align-items: flex-start; color: #666; font-size: 44px; line-height: 60px; padding: 32px 0 0 59px; overflow: hidden; }
.subtabs svg { margin-top: 10px; }
.subtabs b { font-size: 55px; line-height: 60px; font-style: italic; font-weight: 700; color: #774b12; margin-left: 32px; }
.subtabs span { margin-left: 71px; }
.subtabs b + span { margin-left: 69px; }
.subtabs .fade { background: linear-gradient(90deg, #bbb, #fff 32px); -webkit-background-clip: text; background-clip: text; color: transparent; }

.bar { height: 193px; flex: none; background: #252525; position: relative; display: flex; color: #d9d9d9; }
.idx { width: 248px; display: flex; flex-direction: column; align-items: center; padding-top: 12px; }
.nm { font-size: 32px; line-height: 40px; margin-top: 15px; color: #9c8f85; }
.pc { font-size: 36px; line-height: 42px; margin-top: 18px; color: #f01418; }
.it { width: 208px; display: flex; flex-direction: column; align-items: center; padding-top: 22px; font-size: 32px; line-height: 42px; }
.it span { margin-top: 4px; }
.home { position: absolute; left: 327px; top: 162px; width: 418px; height: 11px; border-radius: 6px; background: #b2b2b2; }
.mark { position: absolute; right: 3px; bottom: 1px; color: #fff; width: 212px; }
.m1 { display: flex; align-items: center; gap: 9px; font-size: 33px; line-height: 38px; margin-bottom: 1px; }
.m2 { font-size: 19px; line-height: 22px; font-weight: 500; margin-left: 4px; letter-spacing: 2px; }
</style>
